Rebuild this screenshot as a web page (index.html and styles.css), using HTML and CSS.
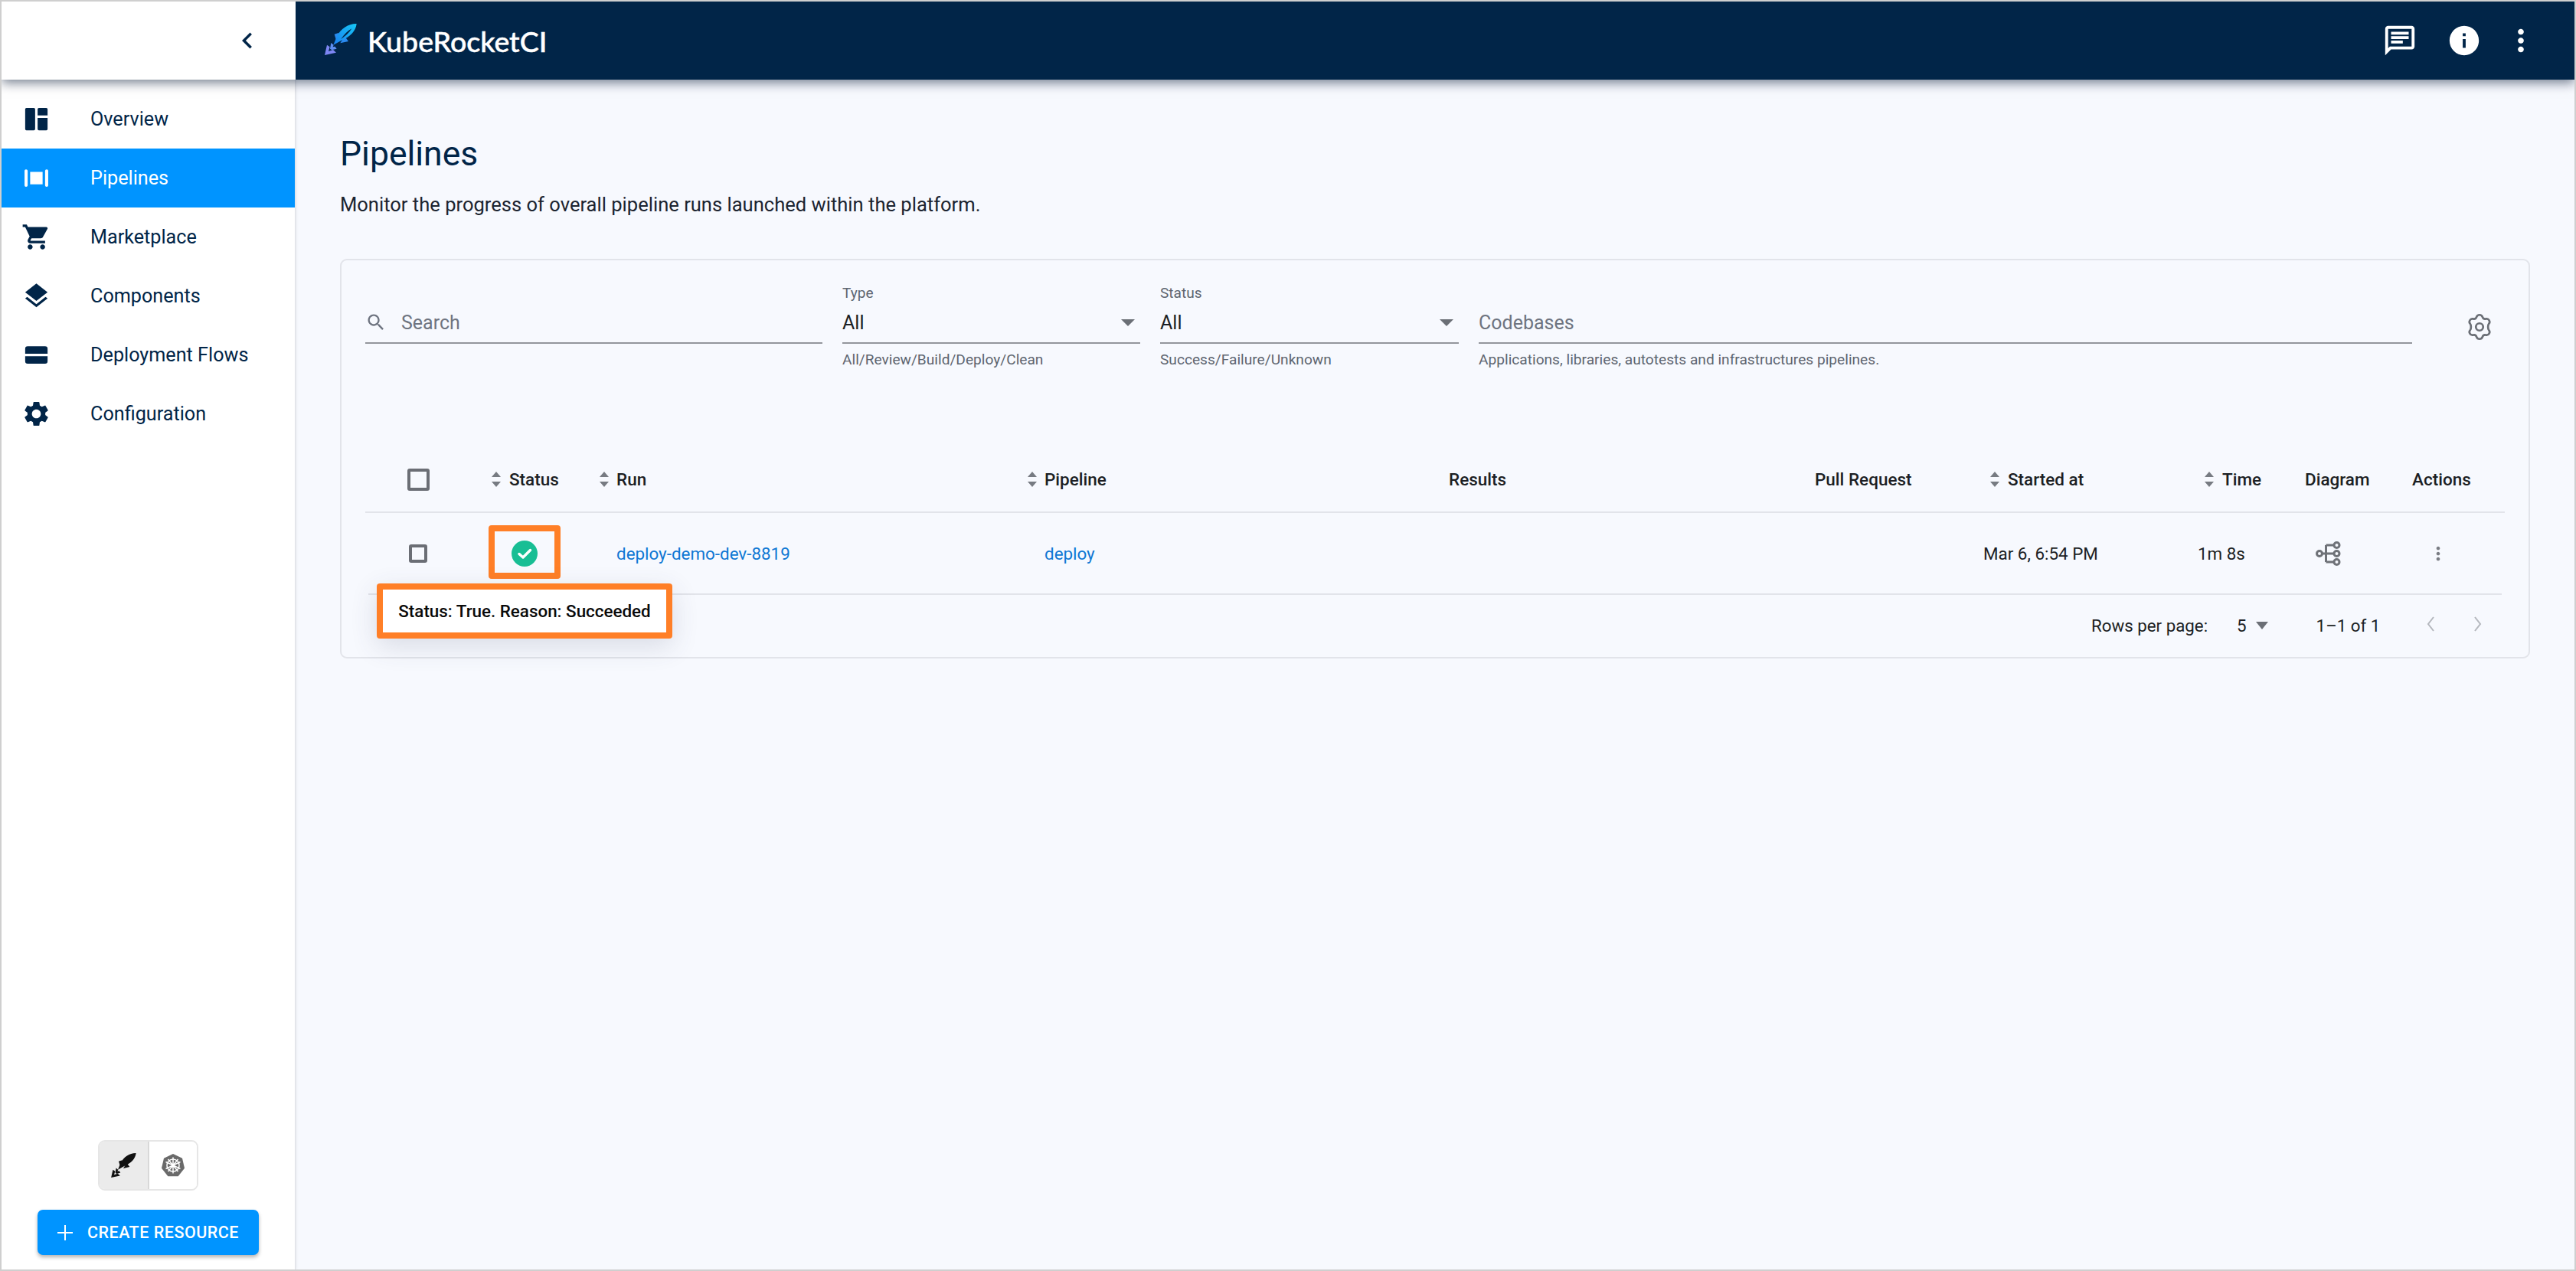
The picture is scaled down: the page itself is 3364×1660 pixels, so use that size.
FILE: index.html
```html
<!DOCTYPE html>
<html lang="en">
<head>
<meta charset="utf-8">
<title>Pipelines</title>
<link rel="stylesheet" href="styles.css">
</head>
<body>
<div class="frame">
  <header class="appbar">
    <div class="appbar-left">
      <svg class="collapse" viewBox="0 0 24 24"><path d="M15.41 7.41 14 6l-6 6 6 6 1.41-1.41L10.83 12z"/></svg>
    </div>
    <div class="appbar-right">
      <svg class="logo" viewBox="60 55 150 150">
        <defs><linearGradient id="lg" x1="1" y1="0" x2="0" y2="1"><stop offset="0" stop-color="#16c8f5"/><stop offset="1" stop-color="#1a7df0"/></linearGradient></defs>
        <path d="M110 108 128 102 118 134Z" fill="#2b8af0"/>
        <path d="M133 143 165 136 150 116Z" fill="#2b8af0"/>
        <path fill="url(#lg)" d="M197 67C166 66 136 85 120 116L106 150 138 132C172 118 194 96 197 67ZM178 86C162 95 148 110 136 127 153 116 168 103 178 86Z" fill-rule="evenodd"/>
        <path d="M72 190 81 150 92 158 87 175 105 169 117 180Z" fill="#7d86f2"/>
        <path d="M93 165 97 142 107 150 104 158 112 156 119 165 100 170Z" fill="#5f8ff2"/>
      </svg>
      <span class="brand">KubeRocketCI</span>
      <div class="appbar-actions">
        <svg class="top-icon chat" viewBox="0 0 24 24"><path d="M20 2H4c-1.100 0-2 .9-2 2v18l4-4h14c1.100 0 2-.9 2-2V4c0-1.100-.9-2-2-2zm0 14H5.170L4 17.170V4h16v12zM6 12h8v2H6zm0-3h12v2H6zm0-3h12v2H6z"/></svg>
        <svg class="top-icon info" viewBox="0 0 24 24"><path d="M12 2C6.480 2 2 6.480 2 12s4.480 10 10 10 10-4.480 10-10S17.520 2 12 2zm1 15h-2v-6h2v6zm0-8h-2V7h2v2z"/></svg>
        <svg class="top-icon" viewBox="0 0 24 24"><path d="M12 8c1.100 0 2-.9 2-2s-.9-2-2-2-2 .9-2 2 .9 2 2 2zm0 2c-1.100 0-2 .9-2 2s.9 2 2 2 2-.9 2-2-.9-2-2-2zm0 6c-1.100 0-2 .9-2 2s.9 2 2 2 2-.9 2-2-.9-2-2-2z"/></svg>
      </div>
    </div>
  </header>

  <div class="body">
    <aside class="sidebar">
      <nav class="nav">
        <a class="nav-item"><svg class="nav-icon" viewBox="0 0 24 24"><path d="M4 3h6a1 1 0 0 1 1 1v16a1 1 0 0 1-1 1H4a1 1 0 0 1-1-1V4a1 1 0 0 1 1-1zm10 0h6a1 1 0 0 1 1 1v5h-8V4a1 1 0 0 1 1-1zm-1 8h8v9a1 1 0 0 1-1 1h-6a1 1 0 0 1-1-1z"/></svg><span>Overview</span></a>
        <a class="nav-item active"><svg class="nav-icon" viewBox="0 0 24 24"><path d="M3.700 5c.7 0 1.300.5 1.300 1.200v11.600c0 .7-.6 1.200-1.300 1.200s-1.200-.5-1.200-1.200V6.200c0-.7.5-1.200 1.200-1.200zm16.600 0c.7 0 1.200.5 1.200 1.200v11.600c0 .7-.5 1.200-1.200 1.200s-1.300-.5-1.300-1.200V6.200c0-.7.6-1.200 1.300-1.200zM7 7h10v10H7z"/></svg><span>Pipelines</span></a>
        <a class="nav-item"><svg class="nav-icon" viewBox="0 0 24 24"><path d="M7 18c-1.100 0-1.990.9-1.990 2S5.900 22 7 22s2-.9 2-2-.9-2-2-2zM1 2v2h2l3.600 7.590-1.350 2.450c-.16.280-.25.610-.25.960 0 1.100.9 2 2 2h12v-2H7.420c-.14 0-.25-.11-.25-.25l.03-.12.9-1.630h7.450c.750 0 1.410-.41 1.750-1.030l3.580-6.490c.08-.14.120-.31.120-.48 0-.55-.45-1-1-1H5.210l-.94-2H1zm16 16c-1.100 0-1.990.9-1.990 2s.89 2 1.990 2 2-.9 2-2-.9-2-2-2z"/></svg><span>Marketplace</span></a>
        <a class="nav-item"><svg class="nav-icon" viewBox="0 0 24 24"><path d="M11.990 18.540l-7.370-5.730L3 14.070l9 7 9-7-1.630-1.270-7.380 5.740zM12 16l7.360-5.730L21 9l-9-7-9 7 1.630 1.270L12 16z"/></svg><span>Components</span></a>
        <a class="nav-item"><svg class="nav-icon" viewBox="0 0 24 24"><path d="M5 5h14a2 2 0 0 1 2 2v4H3V7a2 2 0 0 1 2-2zM3 13h18v4a2 2 0 0 1-2 2H5a2 2 0 0 1-2-2z"/></svg><span>Deployment Flows</span></a>
        <a class="nav-item"><svg class="nav-icon" viewBox="0 0 24 24"><path d="M19.140 12.940c.04-.3.060-.61.060-.94 0-.32-.02-.64-.07-.94l2.030-1.580c.18-.14.230-.41.120-.61l-1.920-3.320c-.12-.22-.37-.29-.59-.22l-2.390.960c-.5-.38-1.030-.7-1.620-.94l-.36-2.540c-.04-.24-.24-.41-.48-.41h-3.840c-.24 0-.43.170-.47.410l-.36 2.540c-.59.240-1.130.570-1.620.940l-2.390-.96c-.22-.08-.47 0-.59.220L2.740 8.870c-.12.210-.08.470.120.610l2.030 1.580c-.05.3-.09.630-.09.940s.02.640.07.940l-2.030 1.580c-.18.140-.23.410-.12.610l1.920 3.320c.12.220.37.290.59.220l2.390-.96c.5.380 1.030.7 1.620.94l.36 2.540c.05.240.24.410.48.410h3.840c.24 0 .44-.17.47-.41l.36-2.540c.59-.24 1.130-.56 1.620-.94l2.390.96c.22.080.47 0 .59-.22l1.920-3.320c.12-.22.070-.47-.12-.61l-2.010-1.580zM12 15.600c-1.980 0-3.600-1.620-3.600-3.600s1.620-3.600 3.600-3.600 3.600 1.620 3.600 3.600-1.620 3.600-3.600 3.600z"/></svg><span>Configuration</span></a>
      </nav>
      <div class="side-bottom">
        <div class="toggle">
          <div class="toggle-cell selected">
            <svg class="toggle-rocket" viewBox="60 55 150 150">
              <path d="M110 108 128 102 118 134Z"/><path d="M133 143 165 136 150 116Z"/>
              <path d="M197 67C166 66 136 85 120 116L106 150 138 132C172 118 194 96 197 67Z"/>
              <path d="M72 190 81 150 92 158 87 175 105 169 117 180Z"/>
              <path d="M93 165 97 142 107 150 104 158 112 156 119 165 100 170Z"/>
            </svg>
          </div>
          <div class="toggle-cell">
            <svg class="helm" viewBox="0 0 32 32">
              <path class="helm-bg" d="M16 1 28 6.800 31 19.800 22.700 30.200H9.300L1 19.800 4 6.800Z"/>
              <g class="helm-wheel">
                <circle cx="16" cy="16" r="8"/>
                <path d="M16 5.500V26.500M6.500 11.500 25.500 20.500M6.500 20.500 25.500 11.500M9.500 8 22.500 24M22.500 8 9.500 24"/>
              </g>
              <circle class="helm-hub" cx="16" cy="16" r="2.200"/>
            </svg>
          </div>
        </div>
        <button class="create">
          <svg class="plus" viewBox="0 0 20 20"><path d="M9 0h2v9h9v2h-9v9H9v-9H0V9h9z"/></svg>
          <span>CREATE RESOURCE</span>
        </button>
      </div>
    </aside>

    <main class="content">
      <h1 class="title">Pipelines</h1>
      <p class="subtitle">Monitor the progress of overall pipeline runs launched within the platform.</p>

      <section class="card">
        <div class="filters">
          <div class="field f-search">
            <div class="f-label"></div>
            <div class="f-input">
              <svg class="search-icon" viewBox="0 0 24 24"><path d="M15.500 14h-.79l-.28-.27C15.410 12.590 16 11.110 16 9.500 16 5.910 13.090 3 9.500 3S3 5.910 3 9.500 5.910 16 9.500 16c1.610 0 3.090-.59 4.230-1.570l.27.280v.79l5 4.990L20.490 19l-4.990-5zm-6 0C7.010 14 5 11.990 5 9.500S7.010 5 9.500 5 14 7.010 14 9.500 11.990 14 9.500 14z"/></svg>
              <span class="placeholder">Search</span>
            </div>
          </div>
          <div class="field f-type">
            <div class="f-label">Type</div>
            <div class="f-input"><span class="value">All</span><span class="caret"></span></div>
            <div class="f-help">All/Review/Build/Deploy/Clean</div>
          </div>
          <div class="field f-status">
            <div class="f-label">Status</div>
            <div class="f-input"><span class="value">All</span><span class="caret"></span></div>
            <div class="f-help">Success/Failure/Unknown</div>
          </div>
          <div class="field f-code">
            <div class="f-label"></div>
            <div class="f-input"><span class="placeholder">Codebases</span></div>
            <div class="f-help">Applications, libraries, autotests and infrastructures pipelines.</div>
          </div>
          <svg class="gear" viewBox="0 0 24 24"><path d="M9.600 3.700C10.300 1.500 13.700 1.500 14.400 3.700 14.800 5 16 5.600 17.300 5.300 19.600 4.800 21.300 7.700 19.700 9.400 18.800 10.400 18.800 13.600 19.700 14.600 21.300 16.300 19.600 19.200 17.300 18.700 16 18.400 14.800 19 14.400 20.300 13.700 22.500 10.300 22.500 9.600 20.300 9.200 19 8 18.400 6.700 18.700 4.400 19.200 2.700 16.300 4.300 14.600 5.200 13.600 5.200 10.400 4.300 9.400 2.700 7.700 4.400 4.800 6.700 5.300 8 5.600 9.200 5 9.600 3.700Z"/><circle cx="12" cy="12" r="3"/></svg>
        </div>

        <div class="table">
          <div class="row head">
            <div class="cell"><span class="check big"></span></div>
            <div class="cell sort"><svg class="arrows" viewBox="0 0 16 26"><path d="M8 3 14 10H2ZM8 23 2 16H14Z"/></svg>Status</div>
            <div class="cell sort tight"><svg class="arrows" viewBox="0 0 16 26"><path d="M8 3 14 10H2ZM8 23 2 16H14Z"/></svg>Run</div>
            <div class="cell sort tight"><svg class="arrows" viewBox="0 0 16 26"><path d="M8 3 14 10H2ZM8 23 2 16H14Z"/></svg>Pipeline</div>
            <div class="cell">Results</div>
            <div class="cell">Pull Request</div>
            <div class="cell sort inset"><svg class="arrows" viewBox="0 0 16 26"><path d="M8 3 14 10H2ZM8 23 2 16H14Z"/></svg>Started at</div>
            <div class="cell sort inset"><svg class="arrows" viewBox="0 0 16 26"><path d="M8 3 14 10H2ZM8 23 2 16H14Z"/></svg>Time</div>
            <div class="cell">Diagram</div>
            <div class="cell">Actions</div>
          </div>
          <div class="row data">
            <div class="cell"><span class="check"></span></div>
            <div class="cell status-cell">
              <svg class="ok" viewBox="0 0 34 34"><circle cx="17" cy="17" r="17"/><path d="M10 17.500 15 22 24.500 12.500"/></svg>
              <span class="mark"></span>
              <div class="tooltip">Status: True. Reason: Succeeded</div>
            </div>
            <div class="cell"><a class="link">deploy-demo-dev-8819</a></div>
            <div class="cell"><a class="link">deploy</a></div>
            <div class="cell"></div>
            <div class="cell"></div>
            <div class="cell">Mar 6, 6:54 PM</div>
            <div class="cell">1m 8s</div>
            <div class="cell">
              <svg class="diagram" viewBox="0 0 34 34"><path d="M4 17H25M13.500 6V28M13.500 6H25M13.500 28H25"/><circle cx="5" cy="17" r="3.500"/><circle cx="27.500" cy="6" r="3.500"/><circle cx="27.500" cy="17" r="3.500"/><circle cx="27.500" cy="28" r="3.500"/></svg>
            </div>
            <div class="cell">
              <svg class="kebab" viewBox="0 0 24 24"><path d="M12 8c1.100 0 2-.9 2-2s-.9-2-2-2-2 .9-2 2 .9 2 2 2zm0 2c-1.100 0-2 .9-2 2s.9 2 2 2 2-.9 2-2-.9-2-2-2zm0 6c-1.100 0-2 .9-2 2s.9 2 2 2 2-.9 2-2-.9-2-2-2z"/></svg>
            </div>
          </div>
          <div class="pager">
            <span>Rows per page:</span>
            <span class="pager-size">5</span>
            <span class="caret small"></span>
            <span class="pager-range">1–1 of 1</span>
            <svg class="chev first" viewBox="0 0 14 22"><path d="M11 2 4 11 11 20"/></svg>
            <svg class="chev" viewBox="0 0 14 22"><path d="M3 2 10 11 3 20"/></svg>
          </div>
        </div>
      </section>
    </main>
  </div>
</div>
</body>
</html>
```

FILE: styles.css
```css
* { box-sizing: border-box; }
html, body { margin: 0; height: 100%; }
body { font-family: Roboto, "Liberation Sans", sans-serif; color: #012548; background: #fff; }
.frame { width: 3364px; height: 1660px; border: 2px solid #cfcfcf; display: flex; flex-direction: column; overflow: hidden; }

.appbar { display: flex; height: 102px; flex: none; position: relative; z-index: 3; box-shadow: 0 4px 14px rgba(1, 20, 50, .55); }
.appbar-left { width: 384px; background: #fff; display: flex; align-items: center; justify-content: flex-end; padding-right: 42px; }
.collapse { width: 42px; height: 42px; fill: #012548; }
.appbar-right { flex: 1; background: #012548; display: flex; align-items: center; padding-left: 34px; }
.logo { width: 50px; height: 50px; margin-top: -2px; }
.brand { font-family: Lato, sans-serif; font-weight: 500; font-size: 37.500px; -webkit-text-stroke: .5px #fff; color: #fff; margin-left: 10px; }
.appbar-actions { margin-left: auto; display: flex; margin-right: 47px; }
.top-icon { width: 46px; height: 46px; fill: #fff; }
.top-icon.chat { margin-right: 38px; }
.top-icon.info { margin-right: 28px; }

.body { flex: 1; display: flex; min-height: 0; }
.sidebar { width: 384px; flex: none; background: #fff; border-right: 1px solid #dfe1e6; display: flex; flex-direction: column; box-shadow: 1px 0 3px rgba(0, 0, 0, .08); position: relative; }
.nav { padding-top: 13px; display: flex; flex-direction: column; }
.nav-item { height: 77px; display: flex; align-items: center; padding-left: 26px; font-size: 25.200px; color: #012548; }
.nav-item span { margin-left: 51px; }
.nav-item.active { background: #0094ff; color: #fff; }
.nav-icon { width: 39px; height: 39px; fill: #012548; flex: none; }
.active .nav-icon { fill: #fff; }

.side-bottom { margin-top: auto; display: flex; flex-direction: column; align-items: center; padding-bottom: 19px; }
.toggle { width: 131px; height: 66px; border: 2px solid #e6e6e6; border-radius: 9px; display: flex; overflow: hidden; margin-bottom: 25px; }
.toggle-cell { flex: 1; display: flex; align-items: center; justify-content: center; background: #fff; }
.toggle-cell.selected { background: #ebebeb; border-right: 2px solid #d8d8d8; }
.toggle-rocket { width: 39px; height: 39px; fill: #111; }
.helm { width: 32px; height: 32px; }
.helm-bg { fill: #6a6a6a; }
.helm-wheel { fill: none; stroke: #fff; stroke-width: 1.500; }
.helm-hub { fill: #fff; }
.create { width: 289px; height: 59px; border: 0; border-radius: 7px; background: #0094ff; color: #fff; font: 500 21.500px Roboto, sans-serif; letter-spacing: .5px; display: flex; align-items: center; justify-content: center; box-shadow: 0 3px 5px rgba(0, 0, 0, .3); padding: 0; }
.plus { width: 20px; height: 20px; fill: #fff; margin-right: 19px; }

.content { flex: 1; background: #f7f9fe; padding: 66px 60px 0 58px; min-width: 0; }
.title { margin: 0; font-size: 44.500px; font-weight: 400; line-height: 62px; color: #012548; }
.subtitle { margin: 17px 0 0; font-size: 25.550px; line-height: 36px; color: #1c2430; }
.card { margin-top: 53px; height: 522px; width: 2860px; border: 2px solid #e2e4ea; border-radius: 9px; padding: 31px 31px 0; position: relative; }

.filters { display: flex; gap: 26px; align-items: flex-start; height: 112px; }
.f-search { width: 597px; }
.f-type { width: 389px; }
.f-status { width: 390px; }
.f-code { width: 1219px; }
.f-label { height: 24px; font-size: 19.100px; line-height: 24px; color: #5e6570; }
.f-input { height: 54px; border-bottom: 2px solid #93969c; display: flex; align-items: center; font-size: 25px; position: relative; }
.value { color: #1c1f24; }
.placeholder { color: #6e7480; }
.f-help { margin-top: 8px; font-size: 19.150px; line-height: 26px; color: #5e6570; }
.search-icon { width: 28px; height: 28px; fill: #6e7480; margin-right: 19px; }
.caret { width: 0; height: 0; border-left: 9px solid transparent; border-right: 9px solid transparent; border-top: 9px solid #6b6f76; margin-left: auto; margin-right: 7px; }
.gear { width: 38px; height: 38px; fill: none; stroke: #6b6f76; stroke-width: 1.700; stroke-linejoin: round; margin: 37px 0 0 43px; flex: none; }

.table { margin-top: 101px; }
.row { display: grid; grid-template-columns: 161px 142px 559px 553px 478px 220px 280px 140px 140px 114px; align-items: center; }
.head { height: 86px; border-bottom: 2px solid #e2e4ea; font-size: 22.500px; font-weight: 500; color: #1c1f24; }
.data { height: 105px; font-size: 22.400px; color: #1c1f24; }
.cell { display: flex; align-items: center; min-width: 0; }
.arrows { width: 16px; height: 26px; fill: #777b82; margin-right: 9px; flex: none; }
.sort .arrows { margin-left: 2px; }
.sort.tight .arrows { margin-left: 1px; margin-right: 8px; }
.inset .arrows { margin-left: 7px; }
.check { display: block; width: 24px; height: 24px; border: 4px solid #6b6e75; border-radius: 3px; margin-left: 57px; }
.check.big { width: 29px; height: 29px; margin-left: 55px; }
.link { color: #0f78d4; margin-left: 25px; }
.status-cell { position: relative; height: 105px; width: 94px; justify-content: center; }
.ok { width: 34px; height: 34px; }
.ok circle { fill: #18be94; }
.ok path { fill: none; stroke: #fff; stroke-width: 3.500; stroke-linecap: round; stroke-linejoin: round; }
.mark { position: absolute; left: 0; top: 16px; width: 94px; height: 70px; border: 8px solid #ff7f27; border-radius: 4px; }
.tooltip { position: absolute; left: -146px; top: 92px; width: 386px; height: 72px; z-index: 2; background: #fff; border: 8px solid #ff7f27; border-radius: 4px; color: #0a0a0a; font-size: 22.400px; font-weight: 500; display: flex; align-items: center; justify-content: center; white-space: nowrap; box-shadow: 0 10px 34px rgba(60, 70, 100, .16); }
.diagram { width: 34px; height: 34px; fill: #f7f9fe; stroke: #6f7278; stroke-width: 3; margin-left: 14px; }
.kebab { width: 28px; height: 28px; fill: #7a7d83; margin-left: 20px; }

.pager { margin: 0 4px; height: 81px; border-top: 2px solid #e2e4ea; display: flex; align-items: center; font-size: 22.300px; color: #1c1f24; padding-left: 2250px; }
.pager-size { margin-left: 38px; font-size: 22.300px; }
.caret.small { margin: 0 0 0 12px; border-left-width: 8px; border-right-width: 8px; border-top-width: 10px; }
.pager-range { margin-left: 63px; }
.chev { width: 14px; height: 22px; fill: none; stroke: #b4b7bd; stroke-width: 2; margin-top: -4px; }
.chev.first { margin-left: 59px; margin-right: 48px; }
```
